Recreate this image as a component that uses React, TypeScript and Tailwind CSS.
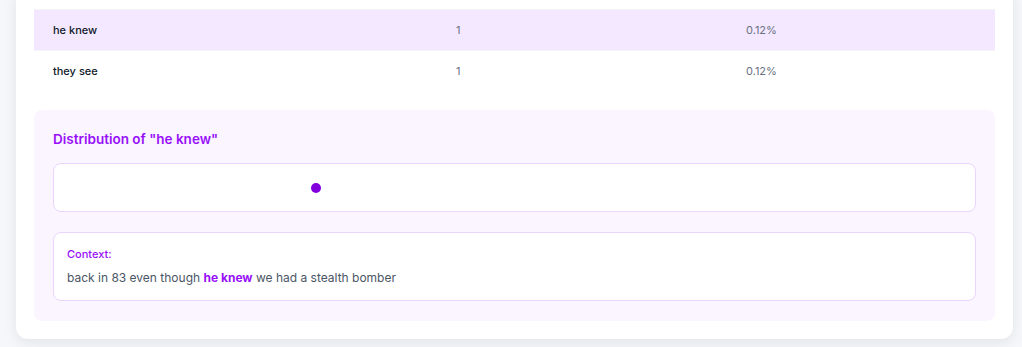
import React from "react";

const rows = [
  { phrase: "he knew", count: 1, pct: "0.12%", active: true },
  { phrase: "they see", count: 1, pct: "0.12%", active: false },
];

function App() {
  return (
    <div className="min-h-screen bg-[#f6f7fb] pl-4 pr-[9px] pb-2 font-['Inter',sans-serif] overflow-hidden">
      <div className="-mt-4 rounded-xl bg-white px-[18px] pt-[25px] pb-[18px] shadow-[0_4px_14px_rgba(0,0,0,0.08)]">
        {/* Tabela de frases */}
        <div className="border-t border-gray-100">
          {rows.map((row) => (
            <div
              key={row.phrase}
              className={`grid grid-cols-[402px_290px_1fr] h-[41px] items-center border-b border-gray-100 last:border-b-0 text-[11px] ${
                row.active ? "bg-purple-100" : "bg-white"
              }`}
            >
              <div className="pl-[19px] font-medium text-gray-900">{row.phrase}</div>
              <div className="pl-5 text-gray-500">{row.count}</div>
              <div className="pl-5 text-gray-500">{row.pct}</div>
            </div>
          ))}
        </div>

        {/* Distribuição */}
        <div className="mt-[18px] rounded-lg bg-purple-50 p-[19px] pb-5">
          <h3 className="mb-[14px] text-[13.5px] leading-5 font-semibold text-purple-600">
            Distribution of "he knew"
          </h3>
          <div className="relative mb-5 h-[49px] rounded-lg border border-[#ead5fe] bg-white">
            <span
              className="absolute top-1/2 h-[10px] w-[10px] -translate-x-1/2 -translate-y-1/2 rounded-full bg-purple-700"
              style={{ left: "28.4%" }}
            ></span>
          </div>
          <div className="rounded-lg border border-[#ead5fe] bg-white px-[13px] pt-[13px] pb-[12px]">
            <div className="mb-[6px] text-[11px] leading-4 font-medium text-purple-600">Context:</div>
            <p className="text-[12px] leading-5 text-gray-600">
              back in 83 even though{" "}
              <span className="font-bold text-purple-600">he knew</span> we had a
              stealth bomber
            </p>
          </div>
        </div>
      </div>
    </div>
  );
}

export default App;
